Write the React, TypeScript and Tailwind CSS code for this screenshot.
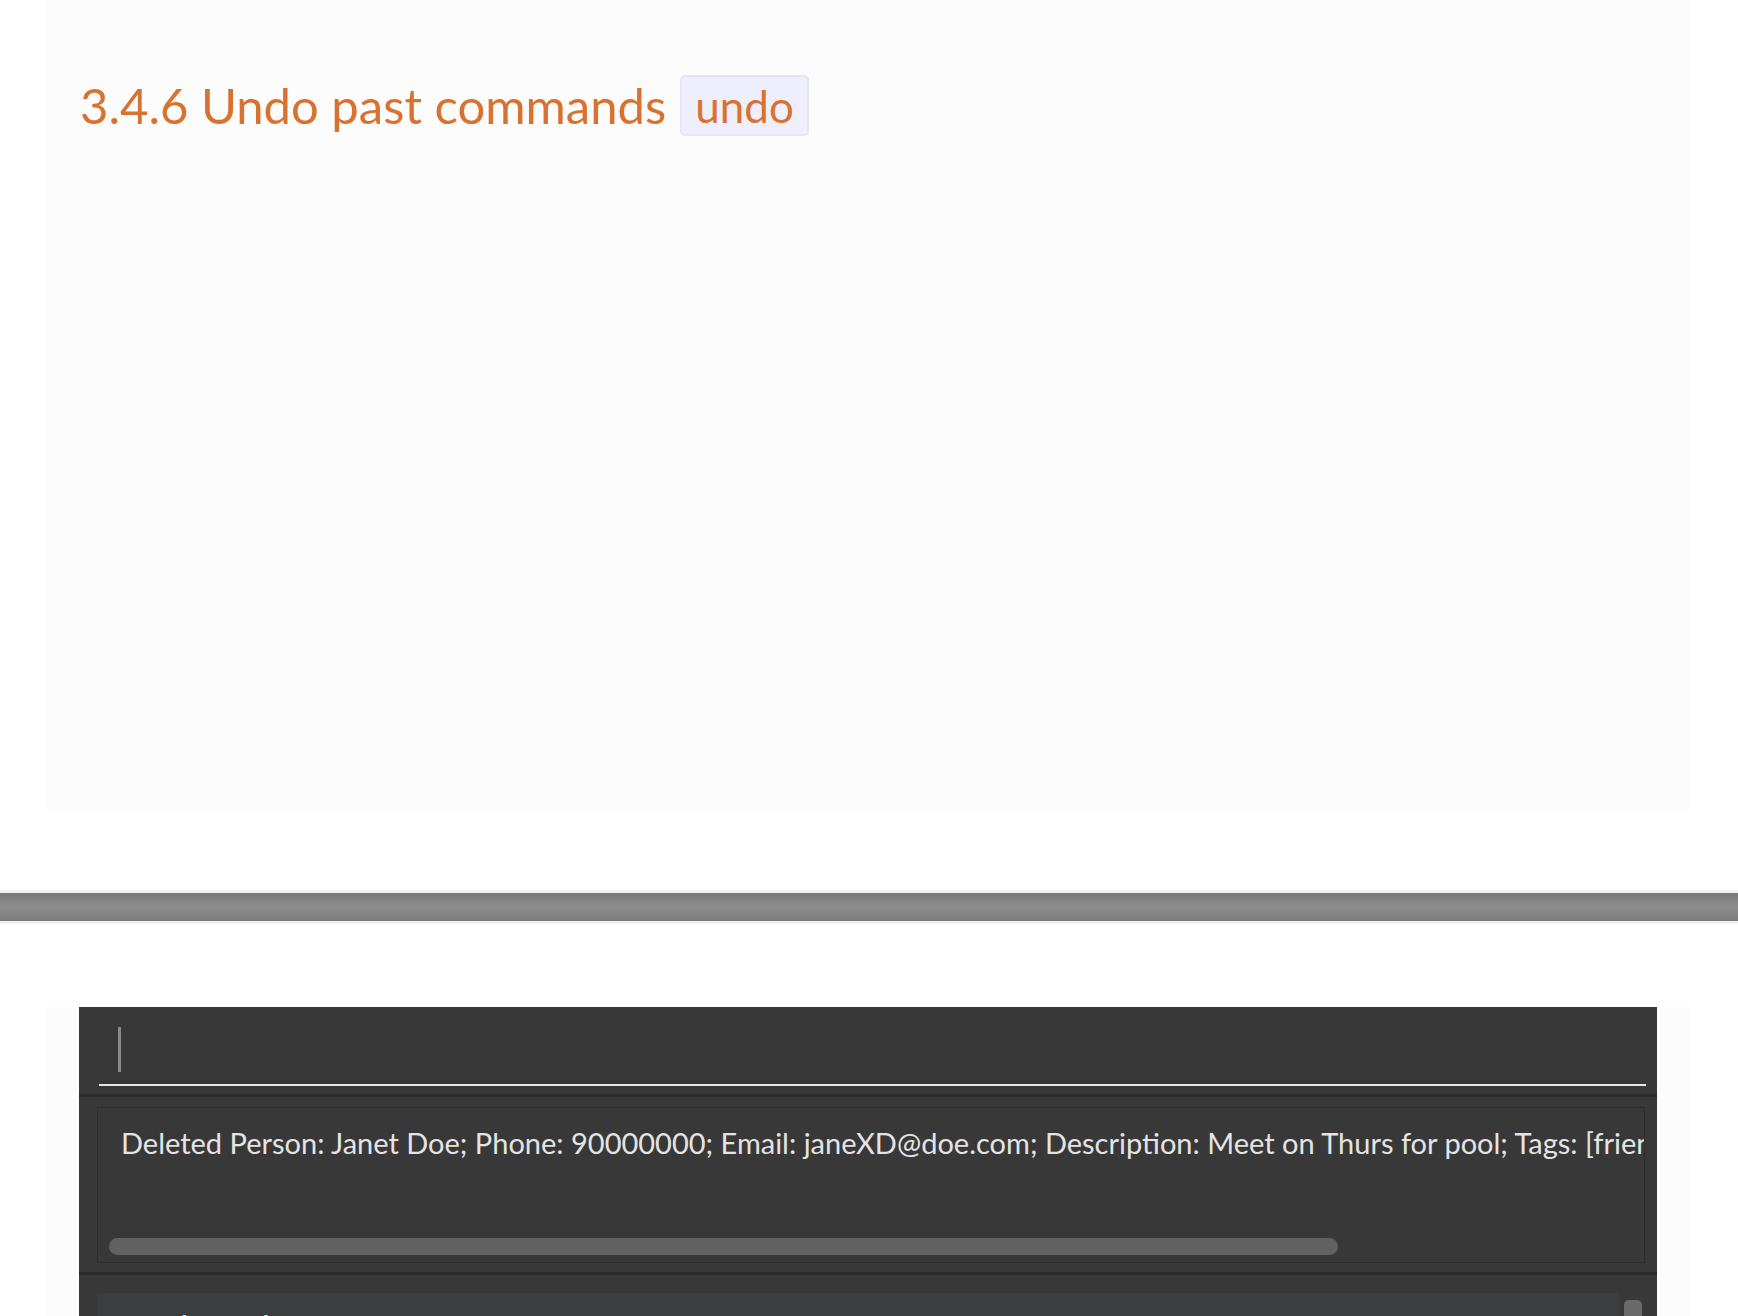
const App = () => {
  return (
    <div className="w-[1738px] h-[1316px] overflow-hidden bg-white flex flex-col" style={{ fontFamily: "Lato, 'Open Sans', sans-serif" }}>
      {/* guide page section */}
      <section className="h-[811px] shrink-0">
        <div className="ml-[46px] w-[1644px] h-full bg-[#fcfcfc]">
          <div className="flex items-center pl-[34px] pt-[75px]">
            <h3 className="text-[49px] leading-[61px] text-[#d97230] font-normal">3.4.6 Undo past commands</h3>
            <span className="ml-[14px] h-[61px] px-[13px] flex items-center rounded-[5px] border-2 border-[#e6e6ec] bg-[#eeeefc] text-[44px] text-[#d97230]">
              undo
            </span>
          </div>
        </div>
      </section>

      {/* divider bar */}
      <div className="mt-[79px] shrink-0">
        <div className="h-[3px] bg-[#f0f0f0]" />
        <div className="h-[28px] bg-linear-to-b from-[#787878] via-[#8e8e8e] to-[#7a7a7a]" />
        <div className="h-[3px] bg-[#f0f0f0]" />
      </div>

      {/* app screenshot */}
      <section className="mt-[83px] ml-[46px] w-[1644px] flex-1 bg-[#fcfcfc]">
        <div className="ml-[33px] w-[1578px] h-full bg-[#383838] flex flex-col">
          {/* command box */}
          <div className="pl-[20px] pr-[11px] pt-[20px]">
            <div className="ml-[19px] w-[3px] h-[45px] bg-[#8a8a8a]" />
            <div className="mt-[12px] h-[2px] bg-[#e6e6e6]" />
          </div>
          <div className="mt-[8px] h-[3px] bg-[#2b2b2b]" />

          {/* result display */}
          <div className="pl-[18px] pr-[12px] pt-[10px] pb-[9px]">
            <div className="h-[156px] border border-[#2d2d2d] flex flex-col justify-between overflow-hidden">
              <p className="pt-[13px] pl-[23px] whitespace-nowrap overflow-hidden text-[29px] text-[#e4e4e4]">
                Deleted Person: Janet Doe; Phone: 90000000; Email: janeXD@doe.com; Description: Meet on Thurs for pool; Tags: [friends]
              </p>
              <div className="ml-[11px] mb-[7px] w-[1229px] h-[17px] rounded-full bg-[#616161]" />
            </div>
          </div>
          <div className="h-[3px] bg-[#2a2a2a]" />

          {/* person list */}
          <div className="flex pl-[18px] pt-[18px] pr-[15px] gap-[5px]">
            <div className="flex-1 h-[60px] bg-[#3c3d3f] pl-[33px] pt-[13px]">
              <p className="text-[26px] font-bold text-[#e0e0e0]">1.&nbsp; Alex Yeoh</p>
            </div>
            <div className="mt-[7px] w-[18px] h-[40px] rounded-[5px] bg-[#6a6a6a]" />
          </div>
        </div>
      </section>
    </div>
  );
};

export default App;
